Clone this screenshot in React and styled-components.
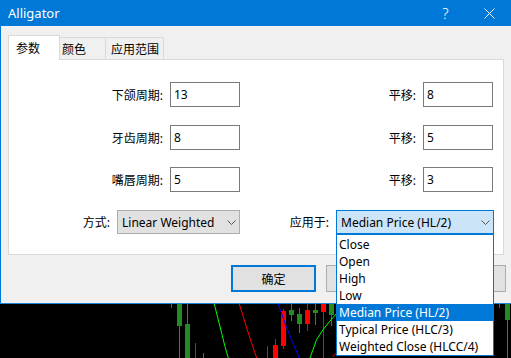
import React from "react";
import styled, { createGlobalStyle } from "styled-components";

const Global = createGlobalStyle`
  html, body { margin: 0; padding: 0; background: #000; overflow: hidden; }
  body {
    font-family: "Segoe UI", "Noto Sans", "Noto Sans CJK SC", sans-serif;
    font-size: 12px;
    color: #000;
  }
  * { box-sizing: border-box; }
`;

const Screen = styled.div`
  width: 511px;
  height: 358px;
  display: flex;
  flex-direction: column;
  overflow: hidden;
`;

const Window = styled.div`
  display: flex;
  flex-direction: column;
  background: #f0f0f0;
  border-bottom: 1px solid #1a84d8;
`;

const TitleBar = styled.div`
  height: 26px;
  background: #0078d7;
  color: #fff;
  display: flex;
  align-items: center;
  padding-left: 8px;
`;

const Title = styled.span`
  font-size: 13px;
  flex: 1;
  margin-top: -1px;
`;

const CaptionButton = styled.div`
  width: ${(p) => p.$w}px;
  height: 26px;
  display: flex;
  align-items: center;
  justify-content: center;
  color: #fff;
  font-size: 15px;
  font-weight: 300;
`;

const Body = styled.div`
  border-left: 1px solid #0078d7;
  padding: 9px 5px 11px 7px;
  display: flex;
  flex-direction: column;
`;

const TabStrip = styled.div`
  height: 24px;
  display: flex;
  align-items: flex-end;
`;

const Tab = styled.div`
  position: relative;
  z-index: ${(p) => (p.$active ? 1 : 0)};
  width: ${(p) => p.$w}px;
  height: ${(p) => (p.$active ? 25 : 22)}px;
  margin-bottom: ${(p) => (p.$active ? -1 : 0)}px;
  padding-left: ${(p) => p.$pl}px;
  display: flex;
  align-items: center;
  background: ${(p) => (p.$active ? "#fff" : "#f0f0f0")};
  border-top: 1px solid #d9d9d9;
  border-right: 1px solid #d9d9d9;
  border-left: ${(p) => (p.$active ? "1px solid #d9d9d9" : "none")};
  white-space: nowrap;
`;

const Panel = styled.div`
  width: 496px;
  height: 196px;
  background: #fff;
  border: 1px solid #d9d9d9;
  padding: 22px 10px 0 0;
  display: flex;
  flex-direction: column;
`;

const Row = styled.div`
  display: grid;
  grid-template-columns: 231px 1fr;
  margin-top: ${(p) => p.$mt || 0}px;
  height: ${(p) => p.$h || 25}px;
`;

const Field = styled.div`
  display: flex;
  justify-content: flex-end;
  align-items: center;
  gap: 7px;
  margin-right: ${(p) => p.$mr || 0}px;
`;

const Label = styled.span`
  white-space: nowrap;
`;

const NumInput = styled.input`
  width: 70px;
  height: 25px;
  border: 1px solid #7a7a7a;
  padding: 0 0 0 3px;
  margin: 0;
  font: inherit;
  color: #000;
  background: #fff;
  outline: none;
`;

const Select = styled.div`
  position: relative;
  width: ${(p) => p.$w}px;
  height: 24px;
  border: 1px solid ${(p) => (p.$open ? "#0078d7" : "#adadad")};
  background: ${(p) => (p.$open ? "#cce4f7" : "#e1e1e1")};
  display: flex;
  align-items: center;
  padding: 0 3px 0 4px;
  white-space: nowrap;
`;

const SelectText = styled.span`
  flex: 1;
`;

const DropList = styled.div`
  position: absolute;
  left: -1px;
  top: 23px;
  width: 158px;
  background: #fff;
  border: 1px solid #0078d7;
  padding-top: 1px;
  z-index: 5;
`;

const Option = styled.div`
  height: 17px;
  line-height: 17px;
  padding-left: 2px;
  white-space: nowrap;
  background: ${(p) => (p.$sel ? "#0078d7" : "transparent")};
  color: ${(p) => (p.$sel ? "#fff" : "#000")};
`;

const ButtonRow = styled.div`
  display: flex;
  justify-content: flex-end;
  gap: 10px;
  margin-top: 10px;
`;

const Button = styled.div`
  width: 85px;
  height: 27px;
  background: #e1e1e1;
  border: ${(p) => (p.$default ? "2px solid #0078d7" : "1px solid #adadad")};
  display: flex;
  align-items: center;
  justify-content: center;
`;

const Chart = styled.svg`
  display: block;
  flex: none;
`;

const Chevron = () => (
  <svg width="9" height="5" viewBox="0 0 9 5">
    <polyline points="0.5,0.5 4.5,4.5 8.5,0.5" fill="none" stroke="#555" strokeWidth="1" />
  </svg>
);

const options = [
  "Close",
  "Open",
  "High",
  "Low",
  "Median Price (HL/2)",
  "Typical Price (HLC/3)",
  "Weighted Close (HLCC/4)",
];

const G = "#228b22";
const R = "#ff0000";

const candles = [
  // [x, bodyTop, bodyBottom, wickTop, wickBottom, color, width]
  [177, 0, 22, 0, 54, G, 5],
  [185, 20, 54, 0, 54, G, 5],
  [273, 41, 54, 35, 54, R, 5],
  [281, 7, 42, 5, 45, R, 5],
  [289, 6, 11, 0, 17, G, 5],
  [297, 10, 20, 4, 29, G, 5],
  [305, 6, 20, 0, 27, R, 5],
  [313, 6, 9, 0, 21, G, 5],
  [321, 0, 8, 0, 54, R, 5],
  [329, 0, 11, 0, 22, G, 5],
  [505, 0, 16, 0, 54, G, 5],
];

const ticks = [
  [171, 0, 4, G],
  [195, 39, 54, R],
  [203, 49, 54, G],
  [267, 42, 54, R],
  [499, 0, 4, G],
];

export default function App() {
  return (
    <Screen>
      <Global />
      <Window>
        <TitleBar>
          <Title>Alligator</Title>
          <CaptionButton $w={45}>?</CaptionButton>
          <CaptionButton $w={43}>
            <svg width="11" height="11" viewBox="0 0 11 11">
              <path d="M0.5 0.5 L10.5 10.5 M10.5 0.5 L0.5 10.5" stroke="#fff" strokeWidth="1" />
            </svg>
          </CaptionButton>
        </TitleBar>
        <Body>
          <TabStrip>
            <Tab $active $w={52} $pl={7}>参数</Tab>
            <Tab $w={46} $pl={2}>颜色</Tab>
            <Tab $w={58} $pl={5}>应用范围</Tab>
          </TabStrip>
          <Panel>
            <Row>
              <Field><Label>下颌周期:</Label><NumInput readOnly value="13" /></Field>
              <Field><Label>平移:</Label><NumInput readOnly value="8" /></Field>
            </Row>
            <Row $mt={18}>
              <Field><Label>牙齿周期:</Label><NumInput readOnly value="8" /></Field>
              <Field><Label>平移:</Label><NumInput readOnly value="5" /></Field>
            </Row>
            <Row $mt={17}>
              <Field><Label>嘴唇周期:</Label><NumInput readOnly value="5" /></Field>
              <Field><Label>平移:</Label><NumInput readOnly value="3" /></Field>
            </Row>
            <Row $mt={18} $h={24}>
              <Field>
                <Label>方式:</Label>
                <Select $w={123}>
                  <SelectText>Linear Weighted</SelectText>
                  <Chevron />
                </Select>
              </Field>
              <Field $mr={-1}>
                <Label>应用于:</Label>
                <Select $w={158} $open>
                  <SelectText>Median Price (HL/2)</SelectText>
                  <Chevron />
                  <DropList>
                    {options.map((o) => (
                      <Option key={o} $sel={o === "Median Price (HL/2)"}>{o}</Option>
                    ))}
                  </DropList>
                </Select>
              </Field>
            </Row>
          </Panel>
          <ButtonRow>
            <Button $default>确定</Button>
            <Button aria-label="取消" />
            <Button aria-label="重置" />
          </ButtonRow>
        </Body>
      </Window>
      <Chart width="511" height="54" viewBox="0 0 511 54">
        <rect x="0" y="0" width="511" height="54" fill="#000" />
        {ticks.map(([x, y1, y2, c], i) => (
          <rect key={"t" + i} x={x} y={y1} width="1" height={y2 - y1} fill={c} />
        ))}
        {candles.map(([x, bt, bb, wt, wb, c, w], i) => (
          <g key={"c" + i}>
            <rect x={x + 2} y={wt} width="1" height={wb - wt} fill={c} />
            <rect x={x} y={bt} width={w} height={bb - bt} fill={c} />
          </g>
        ))}
        <polyline points="214.3,0 218.3,16 221.7,29.3 225,42.7 228.3,54" fill="none" stroke="#00ff00" strokeWidth="1" />
        <polyline points="239.3,0 243.3,12.7 247.3,26 251.7,39.3 256.7,54" fill="none" stroke="#ff0000" strokeWidth="1" />
        <polyline points="278.3,0 285,19.3 291.7,36 299.3,54" fill="none" stroke="#0000ff" strokeWidth="1" />
        <polyline points="310,54 316.7,35.3 323.3,25.3 330,17 337,9" fill="none" stroke="#00ff00" strokeWidth="1" />
        <polyline points="332.7,53 337,48" fill="none" stroke="#ff0000" strokeWidth="1" />
      </Chart>
    </Screen>
  );
}
